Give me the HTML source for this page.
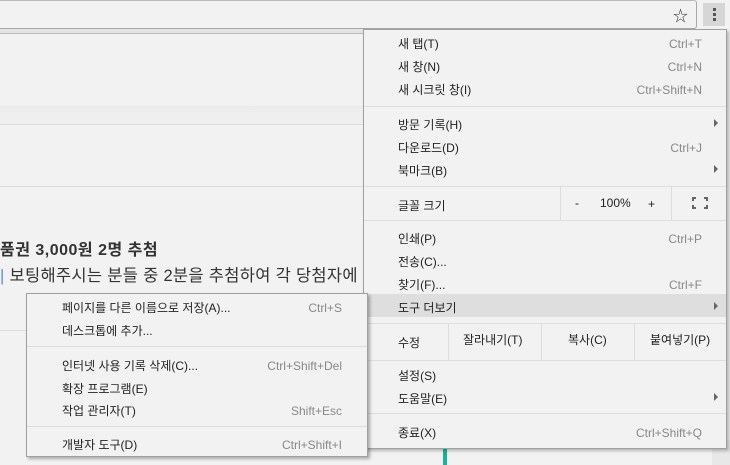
<!DOCTYPE html>
<html><head><meta charset="utf-8"><style>
*{margin:0;padding:0;box-sizing:border-box}
body{width:730px;height:465px;overflow:hidden;background:#f2f2f2;position:relative;font-family:"Liberation Sans","Noto Sans CJK KR","NanumGothic",sans-serif;font-size:12px;color:#222}
.abs{position:absolute}
.t{position:absolute;white-space:nowrap;line-height:14px}
.sc{position:absolute;white-space:nowrap;line-height:14px;color:#888;text-align:right}
.sep{position:absolute;height:1px;background:#ddd}
.arr{position:absolute;width:0;height:0;border-top:4px solid transparent;border-bottom:4px solid transparent;border-left:4px solid #666}
</style></head><body>
<div class="abs" style="left:0;top:0;width:697px;height:29px;border:1px solid #a8a8a8;border-left:none;border-top-color:#bbb;border-radius:0 3px 3px 0;background:#f2f2f2"></div>
<div class="abs" style="left:673px;top:5px;font-size:15px;color:#333">☆</div>
<div class="abs" style="left:703px;top:3px;width:22px;height:23px;background:#d6d6d6"></div>
<div class="abs" style="left:713px;top:8px;width:3px;height:3px;background:#555"></div>
<div class="abs" style="left:713px;top:13px;width:3px;height:3px;background:#555"></div>
<div class="abs" style="left:713px;top:18px;width:3px;height:3px;background:#555"></div>
<div class="abs" style="left:0;top:29px;width:364px;height:5px;background:#e4e4e4;border-bottom:1px solid #bbb"></div>
<div class="abs" style="left:0;top:106px;width:364px;height:7px;background:linear-gradient(#eaeaea,#efefef)"></div>
<div class="abs" style="left:0;top:113px;width:364px;height:11px;background:#efefef"></div>
<div class="sep" style="left:0;top:124px;width:364px;background:#dcdcdc"></div>
<div class="sep" style="left:0;top:186px;width:364px;background:#dcdcdc"></div>
<div class="t" style="left:0;top:242px;font-size:16px;font-weight:bold;color:#333;line-height:18px;letter-spacing:0.5px">품권 3,000원 2명 추첨</div>
<div class="t" style="left:0;top:267px;font-size:16.5px;color:#333;line-height:18px;letter-spacing:0.3px"><span style="color:#5a8fd0">|</span> 보팅해주시는 분들 중 2분을 추첨하여 각 당첨자에</div>
<div class="sep" style="left:0;top:330px;width:30px;background:#ddd"></div>
<div class="abs" style="left:443px;top:445px;width:4px;height:20px;background:#1ab394"></div>
<div class="abs" style="left:712px;top:440px;width:18px;height:25px;background:#e8e8e8"></div>

<div class="abs" style="left:363px;top:29px;width:364px;height:420px;background:#f2f2f2;border:1px solid #a0a0a0;box-shadow:2px 2px 3px rgba(0,0,0,.25)"></div>
<div class="t" style="left:398px;top:37px">새 탭(T)</div><div class="sc" style="right:28px;top:37px">Ctrl+T</div>
<div class="t" style="left:398px;top:60px">새 창(N)</div><div class="sc" style="right:28px;top:60px">Ctrl+N</div>
<div class="t" style="left:398px;top:83px">새 시크릿 창(I)</div><div class="sc" style="right:28px;top:83px">Ctrl+Shift+N</div>
<div class="sep" style="left:364px;top:106px;width:362px"></div>
<div class="t" style="left:398px;top:118px">방문 기록(H)</div><div class="arr" style="left:714px;top:119px"></div>
<div class="t" style="left:398px;top:141px">다운로드(D)</div><div class="sc" style="right:28px;top:141px">Ctrl+J</div>
<div class="t" style="left:398px;top:164px">북마크(B)</div><div class="arr" style="left:714px;top:165px"></div>
<div class="sep" style="left:364px;top:186px;width:362px"></div>
<div class="t" style="left:398px;top:199px">글꼴 크기</div>
<div class="abs" style="left:560px;top:187px;width:1px;height:33px;background:#ddd"></div>
<div class="abs" style="left:671px;top:187px;width:1px;height:33px;background:#ddd"></div>
<div class="t" style="left:575px;top:196px">-</div>
<div class="t" style="left:600px;top:196px">100%</div>
<div class="t" style="left:648px;top:197px">+</div>
<div class="abs" style="left:692px;top:197px;width:16px;height:12px;border:2px solid #666;"></div>
<div class="abs" style="left:696px;top:195px;width:8px;height:16px;background:#f2f2f2"></div>
<div class="abs" style="left:690px;top:201px;width:20px;height:4px;background:#f2f2f2"></div>
<div class="sep" style="left:364px;top:220px;width:362px"></div>
<div class="t" style="left:398px;top:232px">인쇄(P)</div><div class="sc" style="right:28px;top:232px">Ctrl+P</div>
<div class="t" style="left:398px;top:255px">전송(C)...</div>
<div class="t" style="left:398px;top:278px">찾기(F)...</div><div class="sc" style="right:28px;top:278px">Ctrl+F</div>
<div class="abs" style="left:364px;top:294px;width:362px;height:23px;background:#dedede"></div>
<div class="t" style="left:398px;top:301px">도구 더보기</div><div class="arr" style="left:714px;top:302px"></div>
<div class="sep" style="left:364px;top:323px;width:362px"></div>
<div class="t" style="left:398px;top:336px">수정</div>
<div class="abs" style="left:448px;top:324px;width:1px;height:36px;background:#ddd"></div>
<div class="abs" style="left:541px;top:324px;width:1px;height:36px;background:#ddd"></div>
<div class="abs" style="left:634px;top:324px;width:1px;height:36px;background:#ddd"></div>
<div class="t" style="left:463px;top:333px">잘라내기(T)</div>
<div class="t" style="left:568px;top:333px">복사(C)</div>
<div class="t" style="left:650px;top:333px">붙여넣기(P)</div>
<div class="sep" style="left:364px;top:360px;width:362px"></div>
<div class="t" style="left:398px;top:369px">설정(S)</div>
<div class="t" style="left:398px;top:392px">도움말(E)</div><div class="arr" style="left:714px;top:393px"></div>
<div class="sep" style="left:364px;top:413px;width:362px"></div>
<div class="t" style="left:398px;top:426px">종료(X)</div><div class="sc" style="right:28px;top:426px">Ctrl+Shift+Q</div>

<div class="abs" style="left:26px;top:293px;width:342px;height:164px;background:#f2f2f2;border:1px solid #a0a0a0;box-shadow:2px 2px 3px rgba(0,0,0,.3)"></div>
<div class="t" style="left:62px;top:301px">페이지를 다른 이름으로 저장(A)...</div><div class="sc" style="right:388px;top:301px">Ctrl+S</div>
<div class="t" style="left:62px;top:324px">데스크톱에 추가...</div>
<div class="sep" style="left:27px;top:346px;width:340px"></div>
<div class="t" style="left:62px;top:359px">인터넷 사용 기록 삭제(C)...</div><div class="sc" style="right:388px;top:359px">Ctrl+Shift+Del</div>
<div class="t" style="left:62px;top:382px">확장 프로그램(E)</div>
<div class="t" style="left:62px;top:404px">작업 관리자(T)</div><div class="sc" style="right:388px;top:404px">Shift+Esc</div>
<div class="sep" style="left:27px;top:426px;width:340px"></div>
<div class="t" style="left:62px;top:438px">개발자 도구(D)</div><div class="sc" style="right:388px;top:438px">Ctrl+Shift+I</div>
</body></html>
